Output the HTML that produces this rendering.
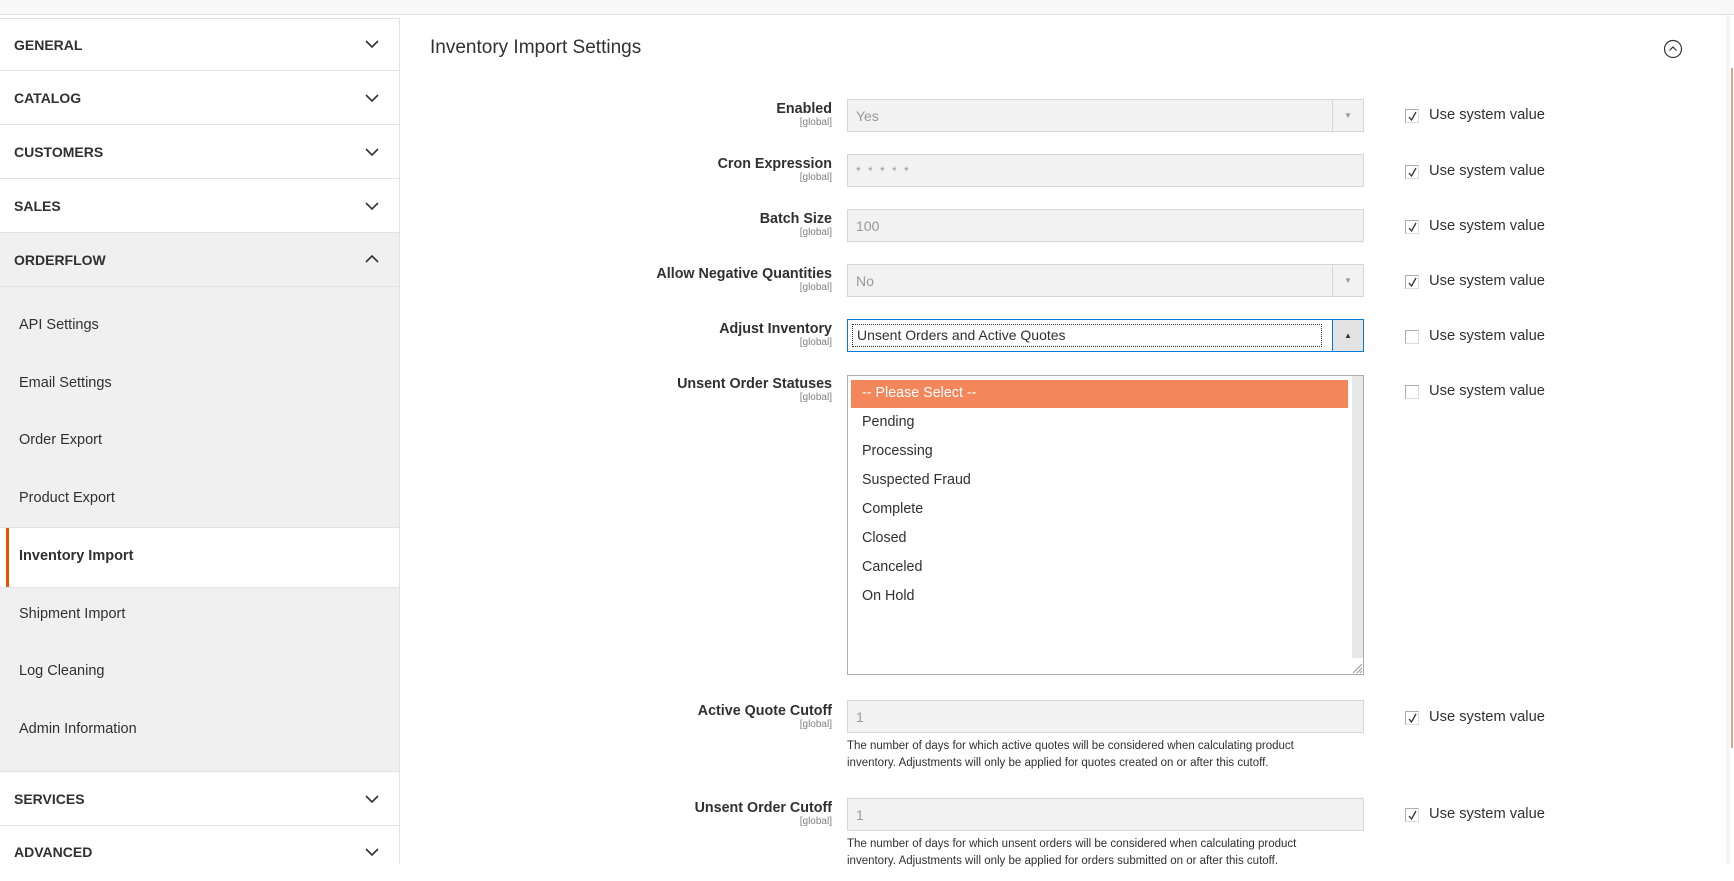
<!DOCTYPE html>
<html><head><meta charset="utf-8"><style>
*{margin:0;padding:0;box-sizing:border-box}
body{width:1734px;height:864px;overflow:hidden;background:#fff;font-family:"Liberation Sans",sans-serif;color:#303030;position:relative}
.a{position:absolute}
.top{left:0;top:0;width:1734px;height:15px;background:#f8f8f8;border-bottom:1px solid #e3e3e3}
.h{position:absolute;left:0;width:399px;border-bottom:1px solid #e3e3e3;background:#fff;font-weight:bold;font-size:14px;padding-left:14px;color:#303030}
.h svg{position:absolute;right:20px}
.si{position:absolute;left:19px;font-size:14.5px;color:#303030}
.lbl{position:absolute;right:902px;text-align:right;font-weight:bold;font-size:14.3px;color:#303030;line-height:16px}
.lbl small{display:block;font-weight:normal;font-size:10px;color:#808080;line-height:11px}
.inp{position:absolute;left:847px;width:517px;height:33px;background:#f2f2f2;border:1px solid #d6d6d6;color:#999;font-size:14px;padding:8px 8px;line-height:16px}
.arr{position:absolute;right:0;top:0;width:31px;height:31px;border-left:1px solid #d6d6d6;font-size:8px;color:#999;text-align:center;line-height:31px}
.cb{position:absolute;left:1405px;width:14px;height:14px;border:1px solid #adadad;border-right-color:#ddd;border-bottom-color:#ddd;background:#fff}
.cb svg{position:absolute;left:1px;top:1px}
.usv{position:absolute;left:1429px;font-size:14.7px;color:#303030}
.note{position:absolute;left:847px;font-size:11.5px;line-height:17px;color:#303030;width:480px}
.opt{position:absolute;left:862px;font-size:14.3px;color:#303030}
</style></head><body>
<div class="a top"></div>
<div class="a" style="left:0;top:18px;width:400px;height:846px;border-right:1px solid #e3e3e3"></div>

<div class="h" style="top:18px;height:53px;line-height:53px;border-top:1px solid #e3e3e3">GENERAL<svg style="top:20px" width="14" height="10"><path d="M1 2l6 6 6-6" fill="none" stroke="#333" stroke-width="1.6"/></svg></div>
<div class="h" style="top:71px;height:54px;line-height:54px">CATALOG<svg style="top:22px" width="14" height="10"><path d="M1 2l6 6 6-6" fill="none" stroke="#333" stroke-width="1.6"/></svg></div>
<div class="h" style="top:125px;height:54px;line-height:54px">CUSTOMERS<svg style="top:22px" width="14" height="10"><path d="M1 2l6 6 6-6" fill="none" stroke="#333" stroke-width="1.6"/></svg></div>
<div class="h" style="top:179px;height:54px;line-height:54px">SALES<svg style="top:22px" width="14" height="10"><path d="M1 2l6 6 6-6" fill="none" stroke="#333" stroke-width="1.6"/></svg></div>
<div class="h" style="top:233px;height:54px;line-height:54px;background:#f0f0f0">ORDERFLOW<svg style="top:21px" width="14" height="10"><path d="M1 8l6-6 6 6" fill="none" stroke="#333" stroke-width="1.6"/></svg></div>
<div class="a" style="left:0;top:287px;width:399px;height:241px;background:#f0f0f0;border-bottom:1px solid #e3e3e3"></div>
<div class="a" style="left:0;top:587px;width:399px;height:184px;background:#f0f0f0;border-top:1px solid #e3e3e3"></div>
<div class="a" style="left:6px;top:528px;width:3px;height:59px;background:#eb5202"></div>
<div class="si" style="top:317px">API Settings</div>
<div class="si" style="top:375px">Email Settings</div>
<div class="si" style="top:432px">Order Export</div>
<div class="si" style="top:490px">Product Export</div>
<div class="si" style="top:548px;font-weight:bold">Inventory Import</div>
<div class="si" style="top:606px">Shipment Import</div>
<div class="si" style="top:663px">Log Cleaning</div>
<div class="si" style="top:721px">Admin Information</div>
<div class="h" style="top:771px;height:55px;line-height:55px;border-top:1px solid #e3e3e3">SERVICES<svg style="top:22px" width="14" height="10"><path d="M1 2l6 6 6-6" fill="none" stroke="#333" stroke-width="1.6"/></svg></div>
<div class="h" style="top:826px;height:55px;line-height:52px;border-bottom:none">ADVANCED<svg style="top:21px" width="14" height="10"><path d="M1 2l6 6 6-6" fill="none" stroke="#333" stroke-width="1.6"/></svg></div>

<div class="a" style="left:430px;top:37px;font-size:19px;color:#303030">Inventory Import Settings</div>
<svg class="a" style="left:1663px;top:39px" width="20" height="20"><circle cx="10" cy="10" r="8.5" fill="none" stroke="#333" stroke-width="1.2"/><path d="M6.5 11.5l3.5-3.5 3.5 3.5" fill="none" stroke="#333" stroke-width="1.2"/></svg>

<div class="lbl" style="top:101px">Enabled<small>[global]</small></div>
<div class="inp" style="top:99px">Yes<div class="arr">▼</div></div>
<div class="lbl" style="top:156px">Cron Expression<small>[global]</small></div>
<div class="inp" style="top:154px;font-size:12px;letter-spacing:2px">* * * * *</div>
<div class="lbl" style="top:211px">Batch Size<small>[global]</small></div>
<div class="inp" style="top:209px">100</div>
<div class="lbl" style="top:266px">Allow Negative Quantities<small>[global]</small></div>
<div class="inp" style="top:264px">No<div class="arr">▼</div></div>
<div class="lbl" style="top:321px">Adjust Inventory<small>[global]</small></div>
<div class="inp" style="top:319px;background:#fff;border-color:#007bdb;color:#303030;padding:4px 4px"><div style="border:1px dotted #333;height:23px;width:470px;padding:2px 4px;line-height:17px">Unsent Orders and Active Quotes</div><div class="arr" style="background:#e3e3e3;color:#333;border-left-color:#007bdb">▲</div></div>
<div class="lbl" style="top:376px">Unsent Order Statuses<small>[global]</small></div>
<div class="a" style="left:847px;top:375px;width:517px;height:300px;border:1px solid #adadad;background:#fff"></div>
<div class="a" style="left:1352px;top:376px;width:11px;height:282px;background:#e8e8e8"></div>
<svg class="a" style="left:1350px;top:661px" width="13" height="13"><path d="M12 3L3 12M12 7L7 12M12 10L10 12" stroke="#999" stroke-width="1"/></svg>
<div class="a" style="left:851px;top:380px;width:497px;height:28px;background:#f3865b"></div>
<div class="opt" style="top:385px;color:#fff">-- Please Select --</div>
<div class="opt" style="top:414px">Pending</div>
<div class="opt" style="top:443px">Processing</div>
<div class="opt" style="top:472px">Suspected Fraud</div>
<div class="opt" style="top:501px">Complete</div>
<div class="opt" style="top:530px">Closed</div>
<div class="opt" style="top:559px">Canceled</div>
<div class="opt" style="top:588px">On Hold</div>

<div class="lbl" style="top:703px">Active Quote Cutoff<small>[global]</small></div>
<div class="inp" style="top:700px">1</div>
<div class="note" style="top:738px">The number of days for which active quotes will be considered when calculating product<br>inventory. Adjustments will only be applied for quotes created on or after this cutoff.</div>
<div class="lbl" style="top:800px">Unsent Order Cutoff<small>[global]</small></div>
<div class="inp" style="top:798px">1</div>
<div class="note" style="top:836px">The number of days for which unsent orders will be considered when calculating product<br>inventory. Adjustments will only be applied for orders submitted on or after this cutoff.</div>

<div class="cb" style="top:109px"><svg width="11" height="11"><path d="M2 6l2.5 3L9 1" fill="none" stroke="#333" stroke-width="1.3"/></svg></div><div class="usv" style="top:107px">Use system value</div>
<div class="cb" style="top:165px"><svg width="11" height="11"><path d="M2 6l2.5 3L9 1" fill="none" stroke="#333" stroke-width="1.3"/></svg></div><div class="usv" style="top:163px">Use system value</div>
<div class="cb" style="top:220px"><svg width="11" height="11"><path d="M2 6l2.5 3L9 1" fill="none" stroke="#333" stroke-width="1.3"/></svg></div><div class="usv" style="top:218px">Use system value</div>
<div class="cb" style="top:275px"><svg width="11" height="11"><path d="M2 6l2.5 3L9 1" fill="none" stroke="#333" stroke-width="1.3"/></svg></div><div class="usv" style="top:273px">Use system value</div>
<div class="cb" style="top:330px"></div><div class="usv" style="top:328px">Use system value</div>
<div class="cb" style="top:385px"></div><div class="usv" style="top:383px">Use system value</div>
<div class="cb" style="top:711px"><svg width="11" height="11"><path d="M2 6l2.5 3L9 1" fill="none" stroke="#333" stroke-width="1.3"/></svg></div><div class="usv" style="top:709px">Use system value</div>
<div class="cb" style="top:808px"><svg width="11" height="11"><path d="M2 6l2.5 3L9 1" fill="none" stroke="#333" stroke-width="1.3"/></svg></div><div class="usv" style="top:806px">Use system value</div>

<div class="a" style="left:1726px;top:15px;width:4px;height:849px;background:#f5f5f5"></div>
<div class="a" style="left:1731px;top:68px;width:2px;height:680px;background:#d8a88e"></div>
</body></html>
